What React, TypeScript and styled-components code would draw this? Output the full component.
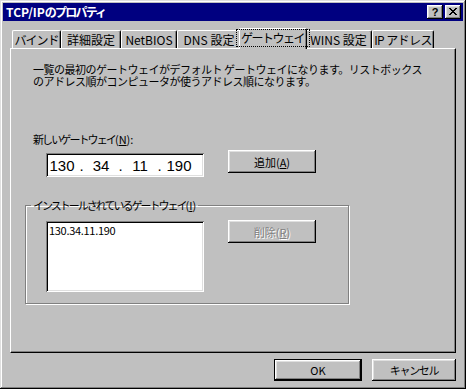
import React from 'react';
import styled, { createGlobalStyle } from 'styled-components';

// 全体のスタイル
const GlobalStyle = createGlobalStyle`
  html, body {
    margin: 0;
    padding: 0;
    background: #c0c0c0;
  }
  body {
    font-family: "Noto Sans CJK JP", "Liberation Sans", sans-serif;
    font-size: 11px;
    color: #000;
  }
`;

const raised = `
  box-shadow: inset -1px -1px #000, inset 1px 1px #fff, inset -2px -2px #808080, inset 2px 2px #dfdfdf;
`;

const sunken = `
  box-shadow: inset 1px 1px #808080, inset -1px -1px #fff, inset 2px 2px #000, inset -2px -2px #dfdfdf;
`;

const Window = styled.div`
  width: 466px;
  height: 389px;
  box-sizing: border-box;
  padding: 3px;
  background: #c0c0c0;
  box-shadow: inset -1px -1px #000, inset 1px 1px #dfdfdf, inset -2px -2px #808080, inset 2px 2px #fff;
  display: flex;
  flex-direction: column;
`;

const TitleBar = styled.div`
  height: 18px;
  background: #000080;
  display: flex;
  align-items: center;
  justify-content: space-between;
  padding: 0 2px;
`;

const Title = styled.span`
  color: #fff;
  font-weight: bold;
  font-size: 12px;
  line-height: 18px;
  padding-left: 1px;
`;

const TitleKana = styled.span`
  letter-spacing: -1.8px;
`;

const TitleButtons = styled.div`
  display: flex;
  gap: 2px;
`;

const TitleButton = styled.div`
  width: 16px;
  height: 14px;
  box-sizing: border-box;
  background: #c0c0c0;
  ${raised}
  display: flex;
  align-items: center;
  justify-content: center;
  font-family: "Liberation Sans", sans-serif;
  font-weight: bold;
  font-size: 11px;
  line-height: 12px;
  padding-bottom: 1px;
`;

const Body = styled.div`
  flex: 1;
  display: flex;
  flex-direction: column;
  padding: 7px 7px 0 7px;
`;

const TabStrip = styled.div`
  height: 21px;
  margin-bottom: -1px;
  display: flex;
  align-items: flex-end;
  padding-left: 2px;
  position: relative;
  z-index: 1;
`;

const Tab = styled.div<{ $w: number; $active?: boolean; $ls: number }>`
  box-sizing: border-box;
  width: ${p => (p.$active ? p.$w + 4 : p.$w)}px;
  height: ${p => (p.$active ? 21 : 18)}px;
  margin: 0 ${p => (p.$active ? -2 : 0)}px ${p => (p.$active ? 0 : 1)}px;
  padding-bottom: ${p => (p.$active ? 2 : 0)}px;
  border-top: 1px solid #fff;
  border-left: 1px solid #fff;
  border-right: 1px solid #000;
  border-radius: 2px 2px 0 0;
  box-shadow: inset -1px 0 #808080;
  background: #c0c0c0;
  position: relative;
  z-index: ${p => (p.$active ? 2 : 0)};
  display: flex;
  align-items: center;
  justify-content: center;
  font-size: 12px;
  line-height: 12px;
  letter-spacing: ${p => p.$ls}px;
  white-space: pre;
`;

const FocusLabel = styled.span`
  outline: 1px dotted #000;
  padding: 2px 5px 2px 4px;
`;

const Panel = styled.div`
  box-sizing: border-box;
  height: 305px;
  border-top: 1px solid #fff;
  border-left: 1px solid #fff;
  border-right: 1px solid #000;
  border-bottom: 1px solid #000;
  box-shadow: inset -1px -1px #808080;
  padding: 14px 14px 0 14px;
  display: flex;
  flex-direction: column;
`;

const Description = styled.p`
  margin: 0 0 0 8px;
  line-height: 12px;
  letter-spacing: -0.5px;
  white-space: nowrap;
`;

const FieldLabel = styled.div`
  margin: 46px 0 0 8px;
  line-height: 12px;
  letter-spacing: -1.9px;
`;

// ニーモニック部分 "(N):" は詰めない
const Mnemonic = styled.span`
  letter-spacing: 0;
`;

const InputRow = styled.div`
  display: flex;
  align-items: flex-start;
  margin-top: 5px;
  padding-left: 21px;
`;

const IpField = styled.div`
  box-sizing: border-box;
  width: 158px;
  height: 24px;
  margin-top: 3px;
  padding-left: 3px;
  background: #fff;
  ${sunken}
  display: flex;
  align-items: center;
  font-family: "Liberation Sans", sans-serif;
  font-size: 15px;
`;

const Octet = styled.span`
  width: 26px;
  text-align: center;
`;

const Dot = styled.span`
  width: 13px;
  text-align: center;
`;

const Button = styled.button<{ $w?: number; $default?: boolean; $ls?: number }>`
  box-sizing: border-box;
  width: ${p => p.$w ?? 88}px;
  height: ${p => (p.$default !== undefined ? 22 : 23)}px;
  margin: 0;
  padding: 0;
  background: #c0c0c0;
  border: ${p => (p.$default ? '1px solid #000' : 'none')};
  border-radius: 0;
  ${raised}
  font-family: inherit;
  font-size: 11px;
  line-height: 12px;
  letter-spacing: ${p => p.$ls ?? 0}px;
  color: #000;
  &:disabled {
    color: #808080;
    text-shadow: 1px 1px #fff;
  }
`;

const AddButton = styled(Button)`
  margin-left: 24px;
`;

const GroupBox = styled.fieldset`
  box-sizing: border-box;
  width: 324px;
  height: 105px;
  margin: 22px 0 0 0;
  padding: 0;
  border: 1px solid #808080;
  box-shadow: 1px 1px #fff, inset 1px 1px #fff;
  min-inline-size: 0;
`;

const GroupLegend = styled.legend`
  margin-left: 5px;
  padding: 0 2px;
  line-height: 12px;
  letter-spacing: -2px;
`;

const GroupRow = styled.div`
  display: flex;
  align-items: flex-start;
  margin-top: 9px;
  padding-left: 20px;
`;

const ListBox = styled.div`
  box-sizing: border-box;
  width: 158px;
  height: 71px;
  margin-top: 1px;
  padding: 3px 3px;
  background: #fff;
  ${sunken}
  line-height: 12px;
  letter-spacing: -0.3px;
`;

const Footer = styled.div`
  display: flex;
  justify-content: flex-end;
  gap: 10px;
  margin-top: 6px;
`;

const CloseIcon = () => (
  <svg width="8" height="7" viewBox="0 0 8 7">
    <path d="M0 0h2v1h1v1h2v-1h1v-1h2v1h-1v1h-1v1h-1v1h1v1h1v1h1v1h-2v-1h-1v-1h-2v1h-1v1h-2v-1h1v-1h1v-1h1v-1h-1v-1h-1v-1h-1z" fill="#000" />
  </svg>
);

const tabs = [
  { label: 'バインド', w: 49, ls: -1 },
  { label: '詳細設定', w: 60, ls: 0 },
  { label: 'NetBIOS', w: 56, ls: 0 },
  { label: 'DNS 設定', w: 64, ls: 0 },
  { label: 'ゲートウェイ', w: 64, ls: -1.5, active: true },
  { label: 'WINS 設定', w: 67, ls: 0 },
  { label: 'IP アドレス', w: 62, ls: -0.6 },
];

const App: React.FC = () => {
  return (
    <>
      <GlobalStyle />
      <Window>
        <TitleBar>
          <Title>TCP/IP<TitleKana>のプロパティ</TitleKana></Title>
          <TitleButtons>
            <TitleButton>?</TitleButton>
            <TitleButton><CloseIcon /></TitleButton>
          </TitleButtons>
        </TitleBar>

        <Body>
          <TabStrip>
            {tabs.map(t => (
              <Tab key={t.label} $w={t.w} $ls={t.ls} $active={t.active}>
                {t.active ? <FocusLabel>{t.label}</FocusLabel> : t.label}
              </Tab>
            ))}
          </TabStrip>

          <Panel>
            <Description>
              一覧の最初のゲートウェイがデフォルト ゲートウェイになります。リストボックス
              <br />
              のアドレス順がコンピュータが使うアドレス順になります。
            </Description>

            <FieldLabel>
              新しいゲートウェイ<Mnemonic>(<u>N</u>):</Mnemonic>
            </FieldLabel>
            <InputRow>
              <IpField>
                <Octet>130</Octet>
                <Dot>.</Dot>
                <Octet>34</Octet>
                <Dot>.</Dot>
                <Octet>11</Octet>
                <Dot>.</Dot>
                <Octet>190</Octet>
              </IpField>
              <AddButton>追加(<u>A</u>)</AddButton>
            </InputRow>

            <GroupBox>
              <GroupLegend>
                インストールされているゲートウェイ<Mnemonic>(<u>I</u>)</Mnemonic>
              </GroupLegend>
              <GroupRow>
                <ListBox>130.34.11.190</ListBox>
                <AddButton disabled>削除(<u>R</u>)</AddButton>
              </GroupRow>
            </GroupBox>
          </Panel>

          <Footer>
            <Button $w={88} $default>OK</Button>
            <Button $w={84} $default={false} $ls={-1.3}>キャンセル</Button>
          </Footer>
        </Body>
      </Window>
    </>
  );
};

export default App;
